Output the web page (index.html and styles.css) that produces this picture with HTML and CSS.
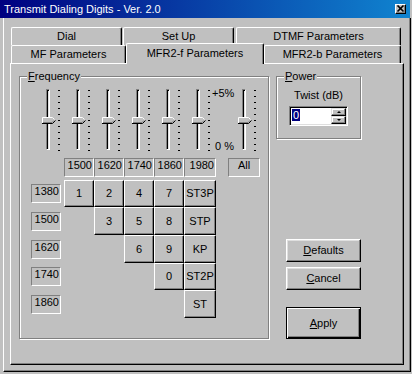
FILE: index.html
```html
<!DOCTYPE html>
<html lang="en">
<head>
    <meta charset="UTF-8">
    <title>Transmit Dialing Digits - Ver. 2.0</title>
    <link rel="stylesheet" href="styles.css">
</head>
<body>

<div class="window">
    <div class="titlebar">
        <span class="title">Transmit Dialing Digits - Ver. 2.0</span>
        <span class="close-btn">
            <svg width="9" height="8" viewBox="0 0 9 8"><path d="M1.5 0.5 L7.5 6.5 M7.5 0.5 L1.5 6.5" stroke="#000" stroke-width="1.6" fill="none"/></svg>
        </span>
    </div>

    <div class="client">
        <div class="tab-row back">
            <div class="tab tab-dial">Dial</div>
            <div class="tab tab-setup">Set Up</div>
            <div class="tab tab-dtmf">DTMF Parameters</div>
        </div>
        <div class="tab-row front">
            <div class="tab tab-mf">MF Parameters</div>
            <div class="tab tab-mfr2f active">MFR2-f Parameters</div>
            <div class="tab tab-mfr2b">MFR2-b Parameters</div>
        </div>

        <div class="panel">
            <div class="group freq-group">
                <span class="group-label"><u>F</u>requency</span>

                <div class="sliders">
                    <div class="slider"><span class="track"></span><span class="ticks"></span>
                        <svg class="thumb" width="14" height="7" viewBox="0 0 14 7"><polygon points="0,0 10,0 13,3 10,6 0,6" fill="#c0c0c0"/><path d="M0.5 6 V0.5 H10.5 L12.5 2.5" fill="none" stroke="#fff"/><path d="M1 5.5 H10 L12 3.5" fill="none" stroke="#808080"/><path d="M0 6.5 H10.5 L13.5 3.5" fill="none" stroke="#000"/></svg></div>
                    <div class="slider"><span class="track"></span><span class="ticks"></span>
                        <svg class="thumb" width="14" height="7" viewBox="0 0 14 7"><polygon points="0,0 10,0 13,3 10,6 0,6" fill="#c0c0c0"/><path d="M0.5 6 V0.5 H10.5 L12.5 2.5" fill="none" stroke="#fff"/><path d="M1 5.5 H10 L12 3.5" fill="none" stroke="#808080"/><path d="M0 6.5 H10.5 L13.5 3.5" fill="none" stroke="#000"/></svg></div>
                    <div class="slider"><span class="track"></span><span class="ticks"></span>
                        <svg class="thumb" width="14" height="7" viewBox="0 0 14 7"><polygon points="0,0 10,0 13,3 10,6 0,6" fill="#c0c0c0"/><path d="M0.5 6 V0.5 H10.5 L12.5 2.5" fill="none" stroke="#fff"/><path d="M1 5.5 H10 L12 3.5" fill="none" stroke="#808080"/><path d="M0 6.5 H10.5 L13.5 3.5" fill="none" stroke="#000"/></svg></div>
                    <div class="slider"><span class="track"></span><span class="ticks"></span>
                        <svg class="thumb" width="14" height="7" viewBox="0 0 14 7"><polygon points="0,0 10,0 13,3 10,6 0,6" fill="#c0c0c0"/><path d="M0.5 6 V0.5 H10.5 L12.5 2.5" fill="none" stroke="#fff"/><path d="M1 5.5 H10 L12 3.5" fill="none" stroke="#808080"/><path d="M0 6.5 H10.5 L13.5 3.5" fill="none" stroke="#000"/></svg></div>
                    <div class="slider"><span class="track"></span><span class="ticks"></span>
                        <svg class="thumb" width="14" height="7" viewBox="0 0 14 7"><polygon points="0,0 10,0 13,3 10,6 0,6" fill="#c0c0c0"/><path d="M0.5 6 V0.5 H10.5 L12.5 2.5" fill="none" stroke="#fff"/><path d="M1 5.5 H10 L12 3.5" fill="none" stroke="#808080"/><path d="M0 6.5 H10.5 L13.5 3.5" fill="none" stroke="#000"/></svg></div>
                    <div class="slider"><span class="track"></span><span class="ticks"></span>
                        <svg class="thumb" width="14" height="7" viewBox="0 0 14 7"><polygon points="0,0 10,0 13,3 10,6 0,6" fill="#c0c0c0"/><path d="M0.5 6 V0.5 H10.5 L12.5 2.5" fill="none" stroke="#fff"/><path d="M1 5.5 H10 L12 3.5" fill="none" stroke="#808080"/><path d="M0 6.5 H10.5 L13.5 3.5" fill="none" stroke="#000"/></svg></div>
                    <div class="slider-scale">
                        <span class="scale-top">+5%</span>
                        <span class="scale-bottom">0 %</span>
                    </div>
                    <div class="slider"><span class="track"></span><span class="ticks"></span>
                        <svg class="thumb" width="14" height="7" viewBox="0 0 14 7"><polygon points="0,0 10,0 13,3 10,6 0,6" fill="#c0c0c0"/><path d="M0.5 6 V0.5 H10.5 L12.5 2.5" fill="none" stroke="#fff"/><path d="M1 5.5 H10 L12 3.5" fill="none" stroke="#808080"/><path d="M0 6.5 H10.5 L13.5 3.5" fill="none" stroke="#000"/></svg></div>
                </div>

                <div class="freq-grid">
                    <!-- column headers -->
                    <div class="freq-label head c2">1500</div>
                    <div class="freq-label head c3">1620</div>
                    <div class="freq-label head c4">1740</div>
                    <div class="freq-label head c5">1860</div>
                    <div class="freq-label head c6">1980</div>
                    <div class="freq-label head all c8">All</div>

                    <!-- row 1380 -->
                    <div class="freq-label row r2">1380</div>
                    <div class="digit r2 c2">1</div>
                    <div class="digit r2 c3">2</div>
                    <div class="digit r2 c4">4</div>
                    <div class="digit r2 c5">7</div>
                    <div class="digit r2 c6">ST3P</div>

                    <!-- row 1500 -->
                    <div class="freq-label row r3">1500</div>
                    <div class="digit r3 c3">3</div>
                    <div class="digit r3 c4">5</div>
                    <div class="digit r3 c5">8</div>
                    <div class="digit r3 c6">STP</div>

                    <!-- row 1620 -->
                    <div class="freq-label row r4">1620</div>
                    <div class="digit r4 c4">6</div>
                    <div class="digit r4 c5">9</div>
                    <div class="digit r4 c6">KP</div>

                    <!-- row 1740 -->
                    <div class="freq-label row r5">1740</div>
                    <div class="digit r5 c5">0</div>
                    <div class="digit r5 c6">ST2P</div>

                    <!-- row 1860 -->
                    <div class="freq-label row r6">1860</div>
                    <div class="digit r6 c6">ST</div>
                </div>
            </div>

            <div class="side">
                <div class="group power-group">
                    <span class="group-label"><u>P</u>ower</span>
                    <div class="twist-label">Twist (dB)</div>
                    <div class="spin-edit">
                        <div class="edit-value"><span class="sel">0</span></div>
                        <div class="spin">
                            <span class="spin-btn"><span class="arrow-up"></span></span>
                            <span class="spin-btn"><span class="arrow-down"></span></span>
                        </div>
                    </div>
                </div>

                <div class="btn btn-defaults"><u>D</u>efaults</div>
                <div class="btn btn-cancel"><u>C</u>ancel</div>
                <div class="btn btn-apply default"><u>A</u>pply</div>
            </div>
        </div>
    </div>
</div>

</body>
</html>
```

FILE: styles.css
```css
body {
    margin: 0;
    background-color: #c0c0c0;
    font-family: "Liberation Sans", Arial, sans-serif;
    font-size: 11px;
    line-height: 13px;
    color: #000;
}

.window {
    width: 411px;
    height: 374px;
    overflow: hidden;
}

/* title bar */
.titlebar {
    width: 410px;
    height: 18px;
    box-sizing: border-box;
    padding: 0 4px;
    display: flex;
    align-items: center;
    justify-content: space-between;
    background: linear-gradient(to right, #000080, #1084d0);
    color: #fff;
}

.close-btn {
    width: 11px;
    height: 10px;
    box-sizing: border-box;
    display: flex;
    align-items: center;
    justify-content: center;
    background-color: #c0c0c0;
    border: 1px solid;
    border-color: #fff #000 #000 #fff;
    box-shadow: inset -1px -1px 0 #808080;
}

.close-btn svg {
    display: block;
}

/* client area */
.client {
    margin-left: 3px;
    height: 354px;
    box-sizing: border-box;
    padding: 9px 0 0 6px;
    border-left: 1px solid #fff;
    border-right: 1px solid #000;
    border-bottom: 1px solid #000;
    box-shadow: inset -1px -1px 0 #808080;
}

/* tabs */
.tab-row {
    display: flex;
    height: 18px;
    padding-left: 1px;
}

.tab-row.front {
    align-items: flex-end;
}

.tab {
    height: 18px;
    box-sizing: border-box;
    display: flex;
    align-items: center;
    justify-content: center;
    border-top: 1px solid #fff;
    border-left: 1px solid #fff;
    border-right: 1px solid #000;
    box-shadow: inset -1px 0 0 #808080;
    border-radius: 2px 2px 0 0;
    background-color: #c0c0c0;
}

.tab-dial { width: 111px; }
.tab-setup { width: 111px; margin-left: 1px; }
.tab-dtmf { width: 165px; margin-left: 2px; }

.tab-mf { width: 115px; }
.tab-mfr2b { width: 137px; }

.tab.active {
    width: 138px;
    height: 21px;
    margin-bottom: -1px;
    padding-bottom: 2px;
    position: relative;
    z-index: 1;
}

/* tab page */
.panel {
    width: 394px;
    height: 302px;
    box-sizing: border-box;
    padding: 12px 0 0 8px;
    border: 1px solid;
    border-color: #fff #000 #000 #fff;
    box-shadow: inset -1px -1px 0 #808080;
    display: flex;
    align-items: flex-start;
}

.group {
    position: relative;
    box-sizing: border-box;
    border: 1px solid #808080;
    box-shadow: 1px 1px 0 #fff, inset 1px 1px 0 #fff;
}

.group-label {
    position: absolute;
    top: -7px;
    left: 7px;
    padding: 0 1px;
    background-color: #c0c0c0;
}

.freq-group {
    width: 250px;
    height: 263px;
    padding-top: 10px;
}

/* sliders */
.sliders {
    display: flex;
    padding-left: 14px;
    height: 66px;
}

.slider {
    position: relative;
    width: 30px;
    height: 66px;
}

.slider .track {
    position: absolute;
    left: 12px;
    top: 2px;
    width: 2px;
    height: 59px;
    border: 1px solid;
    border-color: #808080 #fff #fff #808080;
    background-color: #dfdfdf;
    box-shadow: inset 1px 1px 0 #000;
}

.slider .ticks {
    position: absolute;
    left: 24px;
    top: 3px;
    width: 2px;
    height: 61px;
    background: repeating-linear-gradient(to bottom, #000 0, #000 1px, transparent 1px, transparent 6px);
}

.slider .thumb {
    position: absolute;
    left: 8px;
    top: 30px;
    display: block;
}

.slider-scale {
    width: 18px;
    margin-left: -2px;
    display: flex;
    flex-direction: column;
    justify-content: space-between;
    white-space: nowrap;
}

.scale-bottom {
    padding-left: 3px;
}

/* frequency grid */
.freq-grid {
    display: grid;
    grid-template-columns: 33px 30px 30px 30px 30px 32px 12px 32px;
    grid-template-rows: 22px 27px 28px 28px 27px 28px;
    margin: 5px 0 0 11px;
}

.freq-label {
    height: 19px;
    box-sizing: border-box;
    border: 1px solid;
    border-color: #808080 #fff #fff #808080;
    text-align: right;
    padding-right: 1px;
}

.freq-label.head {
    grid-row: 1;
    align-self: start;
}

.freq-label.all {
    text-align: center;
    padding-right: 0;
}

.freq-label.row {
    grid-column: 1;
    width: 30px;
    align-self: center;
}

.digit {
    box-sizing: border-box;
    display: flex;
    align-items: center;
    justify-content: center;
    border: 1px solid;
    border-color: #fff #000 #000 #fff;
    box-shadow: inset -1px -1px 0 #808080;
}

.r2 { grid-row: 2; }
.r3 { grid-row: 3; }
.r4 { grid-row: 4; }
.r5 { grid-row: 5; }
.r6 { grid-row: 6; }

.c2 { grid-column: 2; }
.c3 { grid-column: 3; }
.c4 { grid-column: 4; }
.c5 { grid-column: 5; }
.c6 { grid-column: 6; }
.c8 { grid-column: 8; }

/* right column */
.side {
    margin-left: 7px;
    width: 86px;
    display: flex;
    flex-direction: column;
}

.power-group {
    width: 85px;
    height: 63px;
    padding-top: 12px;
}

.twist-label {
    text-align: center;
}

.spin-edit {
    width: 59px;
    height: 20px;
    box-sizing: border-box;
    margin: 4px 0 0 12px;
    padding: 1px;
    display: flex;
    background-color: #fff;
    border: 1px solid;
    border-color: #808080 #fff #fff #808080;
    box-shadow: inset 1px 1px 0 #000, inset -1px -1px 0 #dfdfdf;
}

.edit-value {
    flex: 1;
    padding: 1px 0 0 1px;
}

.edit-value .sel {
    display: inline-block;
    background-color: #000080;
    color: #fff;
    line-height: 12px;
    padding: 0 1px;
}

.spin {
    width: 15px;
    display: flex;
    flex-direction: column;
}

.spin-btn {
    height: 8px;
    box-sizing: border-box;
    display: flex;
    align-items: center;
    justify-content: center;
    background-color: #c0c0c0;
    border: 1px solid;
    border-color: #dfdfdf #000 #000 #dfdfdf;
    box-shadow: inset -1px -1px 0 #808080, inset 1px 1px 0 #fff;
}

.arrow-up,
.arrow-down {
    width: 0;
    height: 0;
    border-left: 2px solid transparent;
    border-right: 2px solid transparent;
}

.arrow-up {
    border-bottom: 2px solid #000;
}

.arrow-down {
    border-top: 2px solid #000;
}

/* push buttons */
.btn {
    width: 75px;
    height: 23px;
    box-sizing: border-box;
    margin-left: 10px;
    display: flex;
    align-items: center;
    justify-content: center;
    border: 1px solid;
    border-color: #fff #000 #000 #fff;
    box-shadow: inset -1px -1px 0 #808080, inset 1px 1px 0 #dfdfdf;
}

.btn-defaults { margin-top: 100px; }
.btn-cancel { margin-top: 5px; }

.btn.default {
    margin-top: 17px;
    height: 32px;
    border-color: #000;
    box-shadow: inset 1px 1px 0 #fff, inset -1px -1px 0 #000, inset -2px -2px 0 #808080;
}
```
